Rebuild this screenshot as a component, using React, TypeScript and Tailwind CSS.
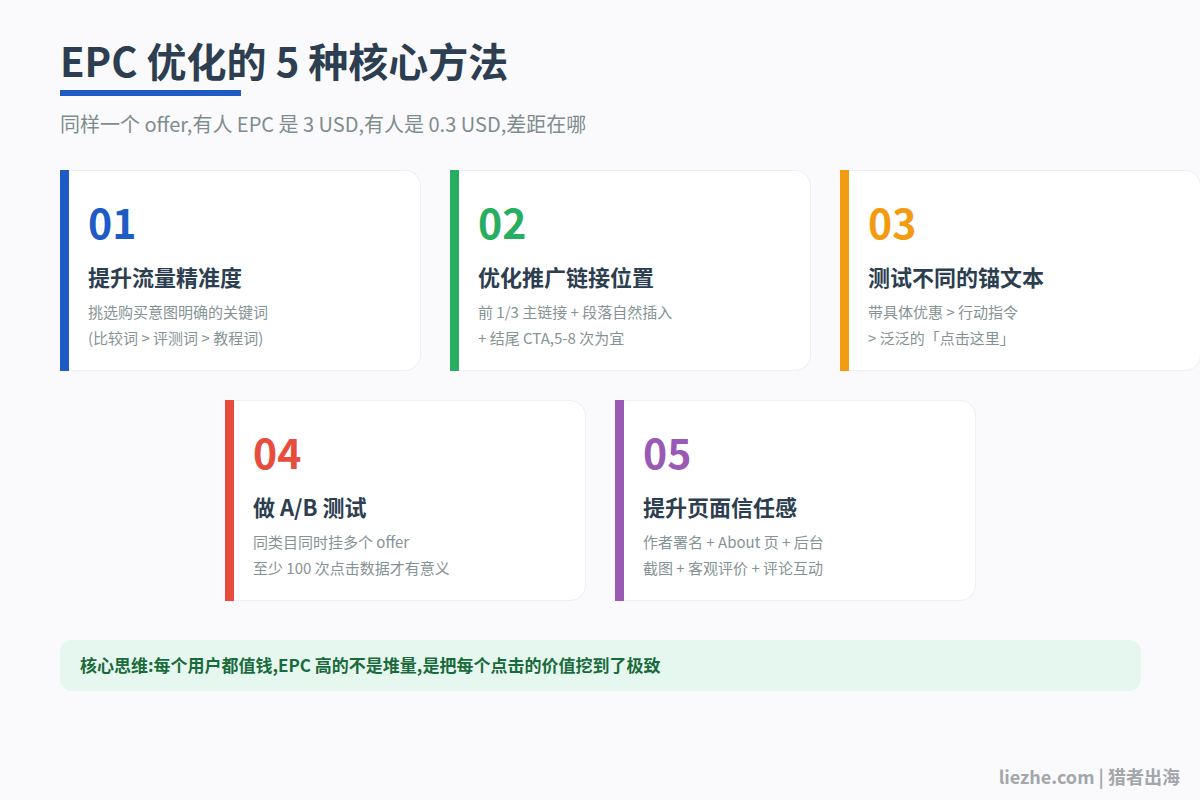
const FONT = "font-['Noto_Sans_CJK_SC','Noto_Sans',sans-serif]"

interface CardProps {
  num: string
  title: string
  lines: string[]
  bar: string
  color: string
}

const row1: CardProps[] = [
  { num: '01', title: '提升流量精准度', lines: ['挑选购买意图明确的关键词', '(比较词 > 评测词 > 教程词)'], bar: 'bg-[#1f5bc4]', color: 'text-[#1f5bc4]' },
  { num: '02', title: '优化推广链接位置', lines: ['前 1/3 主链接 + 段落自然插入', '+ 结尾 CTA,5-8 次为宜'], bar: 'bg-[#27ae60]', color: 'text-[#27ae60]' },
  { num: '03', title: '测试不同的锚文本', lines: ['带具体优惠 > 行动指令', '> 泛泛的「点击这里」'], bar: 'bg-[#f39c12]', color: 'text-[#f39c12]' },
]

const row2: CardProps[] = [
  { num: '04', title: '做 A/B 测试', lines: ['同类目同时挂多个 offer', '至少 100 次点击数据才有意义'], bar: 'bg-[#e74c3c]', color: 'text-[#e74c3c]' },
  { num: '05', title: '提升页面信任感', lines: ['作者署名 + About 页 + 后台', '截图 + 客观评价 + 评论互动'], bar: 'bg-[#9b59b6]', color: 'text-[#9b59b6]' },
]

function Card({ num, title, lines, bar, color }: CardProps) {
  return (
    <div className="flex h-[201px] w-[361px] shrink-0">
      <div className={`w-[9px] shrink-0 ${bar}`} />
      <div className="flex-1 rounded-r-2xl border border-l-0 border-[#eeeff5] bg-white pl-[19px] pt-[22px]">
        <div className={`text-[41px] font-bold leading-[56px] ${color}`}>{num}</div>
        <div className="mt-[11px] text-[22px] font-bold leading-[32px] text-[#2c3e50]">{title}</div>
        <div className="mt-[7px] text-[15px] leading-[26px] text-[#869395]">
          {lines.map((line) => (
            <div key={line}>{line}</div>
          ))}
        </div>
      </div>
    </div>
  )
}

export default function App() {
  return (
    <div className={`h-[800px] w-[1200px] overflow-hidden bg-[#fafafd] pl-[60px] pt-[31px] ${FONT}`}>
      <h1 className="text-[40px] font-bold leading-[59px] text-[#2c3e50]">EPC 优化的 5 种核心方法</h1>
      <div className="h-[6px] w-[181px] bg-[#1f5bc4]" />
      <p className="mt-[12px] text-[20px] leading-[32px] text-[#7f8c8d]">同样一个 offer,有人 EPC 是 3 USD,有人是 0.3 USD,差距在哪</p>

      <div className="mt-[30px] flex w-[1081px] gap-[29px]">
        {row1.map((c) => (
          <Card key={c.num} {...c} />
        ))}
      </div>
      <div className="mt-[29px] flex w-[1081px] justify-center gap-[29px]">
        {row2.map((c) => (
          <Card key={c.num} {...c} />
        ))}
      </div>

      <div className="mt-[39px] flex h-[51px] w-[1081px] items-center rounded-xl bg-[#e6f7ef] pb-[2px] pl-[20px] text-[17px] font-bold text-[#1a6b3c]">
        核心思维:每个用户都值钱,EPC 高的不是堆量,是把每个点击的价值挖到了极致
      </div>

      <div className="mt-[72px] pr-[20px] text-right text-[18px] font-bold leading-[26px] text-[#a3a6aa]">liezhe.com | 猎者出海</div>
    </div>
  )
}
